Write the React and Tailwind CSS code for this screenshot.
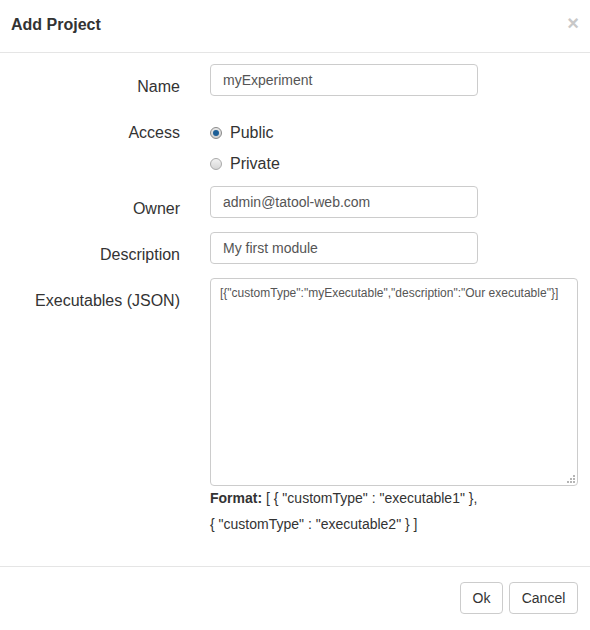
export default function App() {
  const font = { fontFamily: '"Liberation Sans", Arial, sans-serif' };
  return (
    <div className="w-[590px] h-[630px] bg-white text-[#333]" style={font}>
      {/* header */}
      <div className="h-[53px] border-b border-[#e5e5e5] flex items-center justify-between pl-[11px] pr-[11px]">
        <h4 className="text-[16px] font-bold leading-[20px] mt-[-2px]">Add Project</h4>
        <button className="text-[20px] font-bold leading-none text-[#c8c8c8] mt-[-7px]">×</button>
      </div>

      {/* body */}
      <div className="pt-[11px]">
        <div className="flex mb-[14px]">
          <label className="w-[180px] text-right text-[16px] leading-[19px] pt-[13px]">Name</label>
          <div className="ml-[30px]">
            <input
              readOnly
              value="myExperiment"
              className="w-[268px] h-[32px] border border-[#ccc] rounded-[4px] px-[12px] text-[14px] text-[#555] outline-none"
              style={font}
            />
          </div>
        </div>

        <div className="flex mb-[12px]">
          <label className="w-[180px] text-right text-[16px] leading-[20px] pt-[13px]">Access</label>
          <div className="ml-[30px] pt-[13px] flex flex-col gap-[11px]">
            <label className="flex items-center gap-[8px] text-[16px] leading-[20px]">
              <span className="w-[12px] h-[12px] rounded-full border border-[#8a8a8a] bg-gradient-to-b from-[#e8e8e8] to-[#cfcfcf] flex items-center justify-center">
                <span className="w-[6px] h-[6px] rounded-full bg-[#1c5e96]"></span>
              </span>
              Public
            </label>
            <label className="flex items-center gap-[8px] text-[16px] leading-[20px]">
              <span className="w-[12px] h-[12px] rounded-full border border-[#a9a9a9] bg-gradient-to-b from-[#f2f2f2] to-[#d6d6d6]"></span>
              Private
            </label>
          </div>
        </div>

        <div className="flex mb-[14px]">
          <label className="w-[180px] text-right text-[16px] leading-[18px] pt-[14px]">Owner</label>
          <div className="ml-[30px]">
            <input
              readOnly
              value="admin@tatool-web.com"
              className="w-[268px] h-[32px] border border-[#ccc] rounded-[4px] px-[12px] text-[14px] text-[#555] outline-none"
              style={font}
            />
          </div>
        </div>

        <div className="flex mb-[14px]">
          <label className="w-[180px] text-right text-[16px] leading-[18px] pt-[14px]">Description</label>
          <div className="ml-[30px]">
            <input
              readOnly
              value="My first module"
              className="w-[268px] h-[32px] border border-[#ccc] rounded-[4px] px-[12px] text-[14px] text-[#555] outline-none"
              style={font}
            />
          </div>
        </div>

        <div className="flex">
          <label className="w-[180px] text-right text-[16px] leading-[19px] pt-[13px]">Executables (JSON)</label>
          <div className="ml-[30px]">
            <div className="relative">
              <textarea
                readOnly
                value={'[{"customType":"myExecutable","description":"Our executable"}]'}
                className="block w-[368px] h-[208px] border border-[#ccc] rounded-[4px] px-[9px] py-[6px] text-[12px] leading-[16px] text-[#555] outline-none resize-none"
                style={font}
              />
              {/* resize grip */}
              <svg className="absolute right-[2px] bottom-[2px]" width="10" height="10" viewBox="0 0 10 10">
                <g fill="#b5b5b5">
                  <rect x="7" y="1" width="2" height="2" />
                  <rect x="4" y="4" width="2" height="2" />
                  <rect x="7" y="4" width="2" height="2" />
                  <rect x="1" y="7" width="2" height="2" />
                  <rect x="4" y="7" width="2" height="2" />
                  <rect x="7" y="7" width="2" height="2" />
                </g>
              </svg>
            </div>
            <p className="text-[14px] leading-[26px] mt-[-1px]">
              <b>Format:</b> [ {'{'} "customType" : "executable1" {'}'},<br />
              {'{'} "customType" : "executable2" {'}'} ]
            </p>
          </div>
        </div>
      </div>

      {/* footer */}
      <div className="border-t border-[#e5e5e5] mt-[29px] pt-[15px] pr-[12px] flex justify-end gap-[6px]">
        <button className="w-[43px] h-[32px] border border-[#ccc] rounded-[4px] text-[14px] text-[#333] bg-white">Ok</button>
        <button className="w-[69px] h-[32px] border border-[#ccc] rounded-[4px] text-[14px] text-[#333] bg-white">Cancel</button>
      </div>
    </div>
  );
}
